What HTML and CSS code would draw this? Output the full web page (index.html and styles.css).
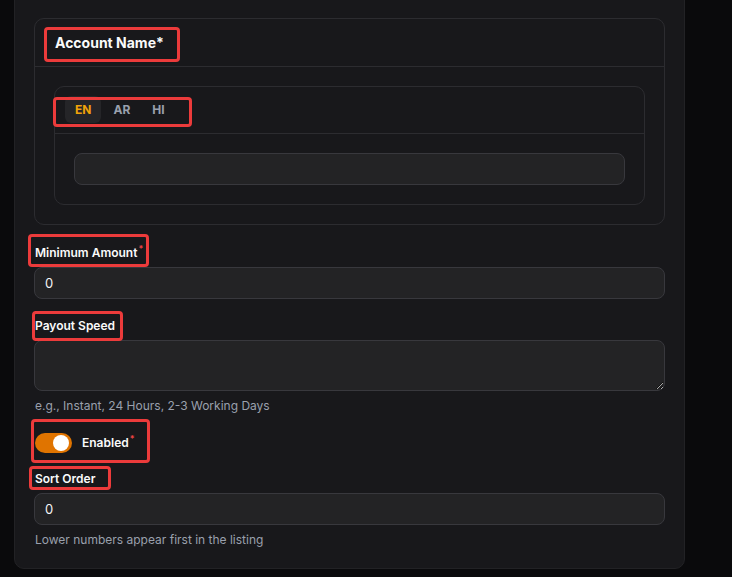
FILE: index.html
```html
<!DOCTYPE html>
<html lang="en">
<head>
    <meta charset="UTF-8">
    <meta name="viewport" content="width=device-width, initial-scale=1.0">
    <title>Payout Method</title>
    <link rel="stylesheet" href="styles.css">
</head>
<body>
    <div class="shot">
        <div class="card">
            <div class="group">
                <div class="group-head">Account Name*</div>
                <div class="group-body">
                    <div class="langs">
                        <div class="lang-tabs">
                            <button class="tab active">EN</button>
                            <button class="tab">AR</button>
                            <button class="tab">HI</button>
                        </div>
                        <div class="lang-body">
                            <input class="input" type="text">
                        </div>
                    </div>
                </div>
            </div>

            <div class="field field-min">
                <label class="label">Minimum Amount<sup class="req">*</sup></label>
                <input class="input" type="text" value="0">
            </div>

            <div class="field">
                <label class="label">Payout Speed</label>
                <textarea class="input textarea"></textarea>
                <p class="hint">e.g., Instant, 24 Hours, 2-3 Working Days</p>
            </div>

            <div class="switch-row">
                <span class="switch"><span class="knob"></span></span>
                <span class="label">Enabled<sup class="req">*</sup></span>
            </div>

            <div class="field field-sort">
                <label class="label">Sort Order</label>
                <input class="input" type="text" value="0">
                <p class="hint">Lower numbers appear first in the listing</p>
            </div>
        </div>

        <!-- review marks drawn on top of the form -->
        <div class="mark mark-name"></div>
        <div class="mark mark-lang"></div>
        <div class="mark mark-min"></div>
        <div class="mark mark-speed"></div>
        <div class="mark mark-enabled"></div>
        <div class="mark mark-sort"></div>
    </div>
</body>
</html>
```

FILE: styles.css
```css
body {
    margin: 0;
    padding: 0;
    background-color: #0a0a0c;
    font-family: Inter, "Liberation Sans", sans-serif;
    color: #fafafa;
}
.shot {
    position: relative;
    width: 732px;
    height: 577px;
    overflow: hidden;
}
.card {
    margin: -12px 0 0 14px;
    width: 631px;
    padding: 29px 19px 19px 19px;
    background-color: #18181b;
    border: 1px solid #222225;
    border-radius: 10px;
}
.group {
    border: 1px solid #2c2c30;
    border-radius: 10px;
}
.group-head {
    height: 47px;
    display: flex;
    align-items: center;
    padding: 0 20px;
    font-size: 14px;
    font-weight: 700;
    border-bottom: 1px solid #2c2c30;
}
.group-body {
    padding: 19px 19px 19px 19px;
}
.langs {
    border: 1px solid #2c2c30;
    border-radius: 10px;
}
.lang-tabs {
    display: flex;
    gap: 2px;
    padding: 9px 10px 10px 10px;
    border-bottom: 1px solid #2c2c30;
}
.tab {
    height: 27px;
    padding: 0 10px;
    background: none;
    border: none;
    border-radius: 6px;
    font-family: inherit;
    font-size: 12px;
    font-weight: 700;
    color: #9aa0ad;
}
.tab.active {
    background-color: #252528;
    color: #f0a30a;
}
.lang-body {
    padding: 19px 19px 19px 19px;
}
.input {
    display: block;
    box-sizing: border-box;
    width: 100%;
    height: 32px;
    padding: 0 10px;
    background-color: #232325;
    border: 1px solid #38383d;
    border-radius: 8px;
    font-family: inherit;
    font-size: 13px;
    color: #f4f4f5;
    outline: none;
}
.textarea {
    height: 51px;
    resize: vertical;
    color-scheme: dark;
}
.field {
    margin-top: 17px;
}
.field-min {
    margin-top: 18px;
}
.label {
    display: block;
    padding-left: 1px;
    font-size: 12px;
    font-weight: 600;
    line-height: 19px;
    margin-bottom: 5px;
    color: #fafafa;
}
.req {
    color: #ef4444;
    font-size: 9px;
    line-height: 0;
    margin-left: 1px;
}
.hint {
    margin: 6px 0 0 1px;
    font-size: 12px;
    line-height: 18px;
    color: #9aa0ad;
}
.switch-row {
    display: flex;
    align-items: center;
    gap: 10px;
    margin: 18px 0 0 1px;
}
.switch-row .label {
    margin: 0;
    padding: 0;
    line-height: 20px;
}
.switch {
    position: relative;
    width: 37px;
    height: 20px;
    border-radius: 10px;
    background-color: #e07400;
}
.knob {
    position: absolute;
    top: 2px;
    right: 3px;
    width: 16px;
    height: 16px;
    border-radius: 50%;
    background-color: #ffffff;
}
.field-sort {
    margin-top: 16px;
}
.mark {
    position: absolute;
    box-sizing: border-box;
    border: 3px solid #ec3b3b;
    border-radius: 4px;
    pointer-events: none;
}
.mark-name { left: 44px; top: 27px; width: 136px; height: 35px; }
.mark-lang { left: 53px; top: 97px; width: 139px; height: 30px; }
.mark-min { left: 28px; top: 234px; width: 121px; height: 33px; }
.mark-speed { left: 32px; top: 311px; width: 91px; height: 30px; }
.mark-enabled { left: 31px; top: 419px; width: 119px; height: 44px; }
.mark-sort { left: 29px; top: 466px; width: 82px; height: 24px; }
```
